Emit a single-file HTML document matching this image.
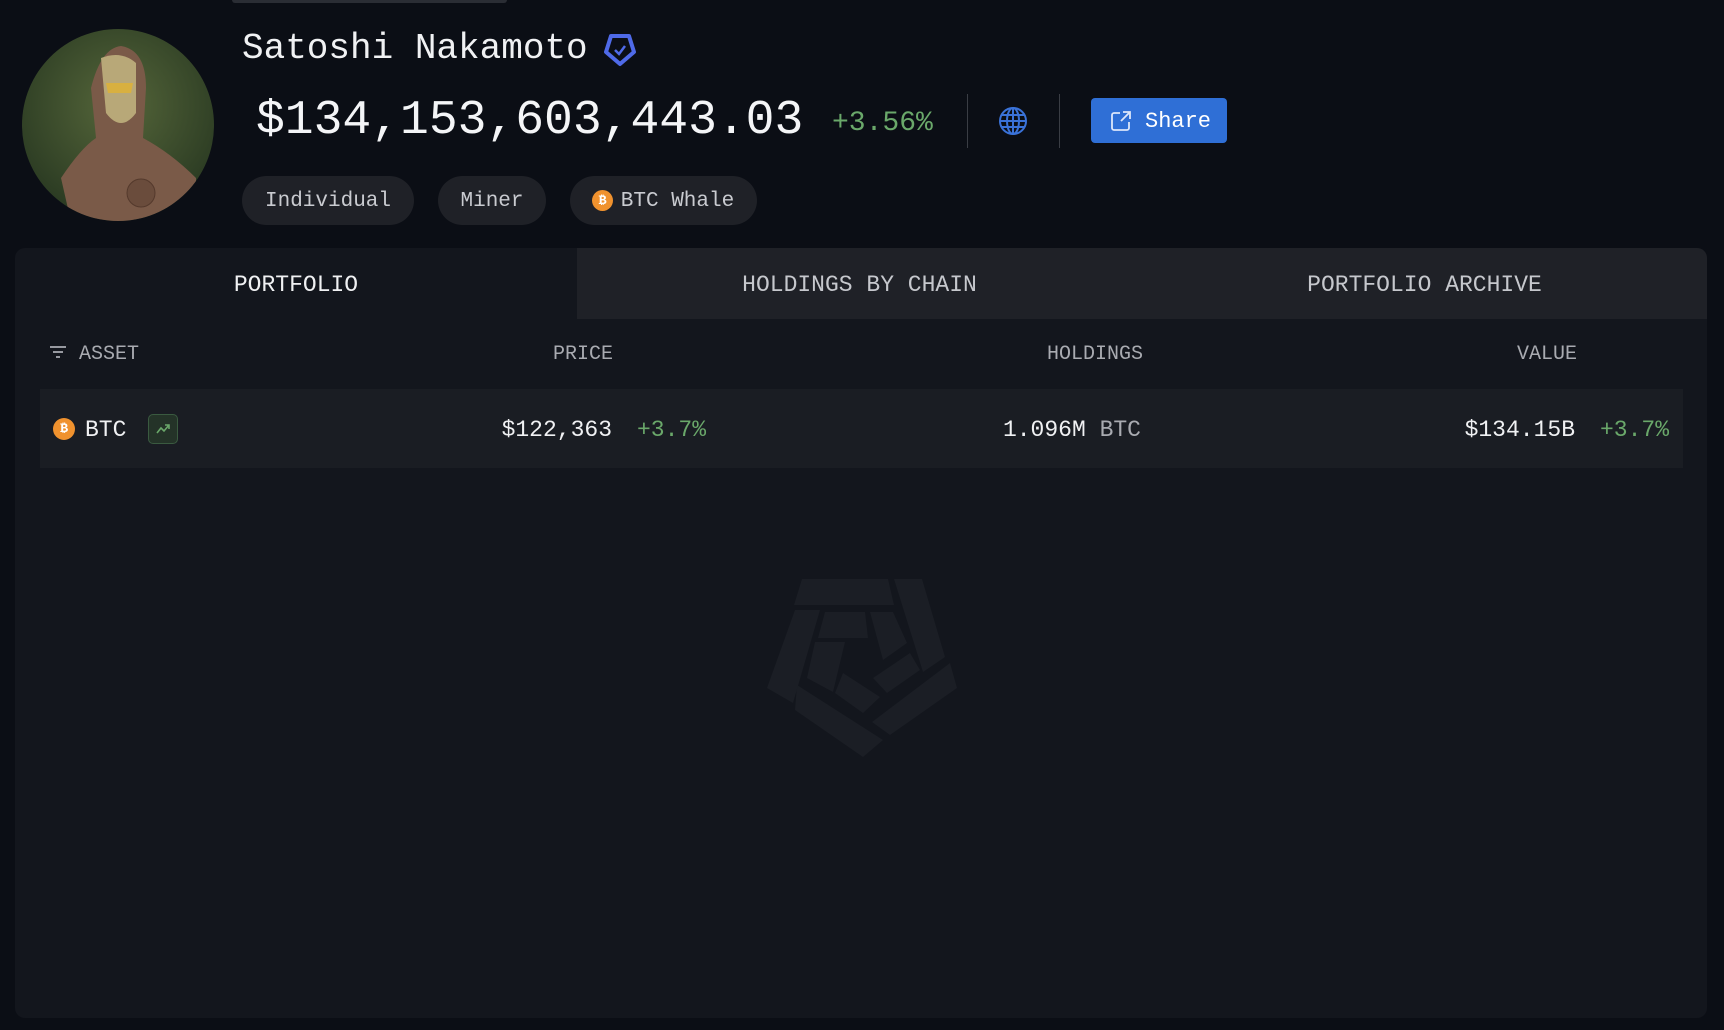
<!DOCTYPE html>
<html><head><meta charset="utf-8"><style>
*{margin:0;padding:0;box-sizing:border-box}
body{width:1724px;height:1030px;background:#0b0e15;font-family:"Liberation Mono",monospace;color:#e8e9ec;position:relative;overflow:hidden}
.a{position:absolute;white-space:nowrap}
.tag{position:absolute;top:176px;height:49px;border-radius:25px;background:#1f2127;color:#c9cbd0;font-size:21px;line-height:51px;text-align:center}
</style></head><body>
<div class="a" style="left:232px;top:0;width:275px;height:3px;background:#2a2d34;border-radius:0 0 3px 3px"></div>
<svg class="a" style="left:21px;top:28px" width="194" height="194" viewBox="0 0 194 194">
<defs><clipPath id="c"><circle cx="97" cy="97" r="96"/></clipPath>
<radialGradient id="g" cx="50%" cy="40%" r="60%"><stop offset="0" stop-color="#55663a"/><stop offset="1" stop-color="#2a3a22"/></radialGradient></defs>
<g clip-path="url(#c)"><rect width="194" height="194" fill="url(#g)"/>
<path d="M50 194 L40 150 Q60 120 75 110 L70 60 Q80 20 100 18 Q125 22 125 60 L122 110 Q150 125 175 150 L175 194Z" fill="#7a5a48"/>
<path d="M80 30 Q100 22 115 35 L115 85 Q100 105 85 85Z" fill="#b8a878"/>
<path d="M85 55 L112 55 L110 65 L87 65Z" fill="#d8b040"/>
<circle cx="120" cy="165" r="14" fill="#6a4c3c" stroke="#54392c"/></g></svg>
<div class="a" style="left:242px;top:28px;font-size:36px;color:#f0f1f3">Satoshi Nakamoto</div>
<svg class="a" style="left:603px;top:33px" width="34" height="34" viewBox="0 0 34 34"><path d="M8 3 H26 L31 19 L17 31 L3 19Z" fill="none" stroke="#4f6ae8" stroke-width="4" stroke-linejoin="round"/><path d="M12 17 L16 21 L22 13" fill="none" stroke="#4f6ae8" stroke-width="2.5"/></svg>
<div class="a" style="left:256px;top:94px;font-size:48px;color:#f4f5f7">$134,153,603,443.03</div>
<div class="a" style="left:832px;top:108px;font-size:28px;color:#6aa86a">+3.56%</div>
<div class="a" style="left:967px;top:94px;width:1px;height:54px;background:#3a3d44"></div>
<svg class="a" style="left:998px;top:106px" width="30" height="30" viewBox="0 0 30 30" fill="none" stroke="#3a72d8" stroke-width="2"><circle cx="15" cy="15" r="13"/><ellipse cx="15" cy="15" rx="6" ry="13"/><path d="M2 15H28M4 9H26M4 21H26M15 2V28"/></svg>
<div class="a" style="left:1059px;top:94px;width:1px;height:54px;background:#3a3d44"></div>
<div class="a" style="left:1091px;top:98px;width:136px;height:45px;background:#2f6fd6;border-radius:4px;color:#fff;font-size:22px;line-height:47px;padding-left:54px">Share</div>
<svg class="a" style="left:1110px;top:110px" width="22" height="22" viewBox="0 0 22 22" fill="none" stroke="#dce6fa" stroke-width="1.8"><path d="M10 3H4a2 2 0 0 0-2 2v13a2 2 0 0 0 2 2h13a2 2 0 0 0 2-2v-6M13 2h7v7M20 2l-9 9"/></svg>
<div class="tag" style="left:242px;width:172px">Individual</div>
<div class="tag" style="left:438px;width:108px">Miner</div>
<div class="tag" style="left:570px;width:187px;padding-left:28px">BTC Whale</div>
<div class="a" style="left:592px;top:190px;width:21px;height:21px;border-radius:50%;background:#f0922e;color:#fff;font-size:13px;line-height:21px;text-align:center;font-weight:bold">₿</div>

<div class="a" style="left:15px;top:248px;width:1692px;height:770px;background:#13161d;border-radius:10px;overflow:hidden">
<div class="a" style="left:562px;top:0;width:1130px;height:71px;background:#1f2127"></div>
<div class="a" style="left:0;top:2px;width:562px;height:71px;line-height:71px;text-align:center;font-size:23px;color:#f0f1f3">PORTFOLIO</div>
<div class="a" style="left:562px;top:2px;width:565px;height:71px;line-height:71px;text-align:center;font-size:23px;color:#c6c8cd">HOLDINGS BY CHAIN</div>
<div class="a" style="left:1127px;top:2px;width:565px;height:71px;line-height:71px;text-align:center;font-size:23px;color:#c6c8cd">PORTFOLIO ARCHIVE</div>
<svg class="a" style="left:34px;top:97px" width="18" height="14" viewBox="0 0 18 14" stroke="#aaacb2" stroke-width="1.8"><path d="M1 2H17M4 7H14M7 12H11"/></svg>
<div class="a" style="left:64px;top:95px;font-size:20px;color:#a9abb1">ASSET</div>
<div class="a" style="right:1094px;top:95px;font-size:20px;color:#a9abb1">PRICE</div>
<div class="a" style="right:564px;top:95px;font-size:20px;color:#a9abb1">HOLDINGS</div>
<div class="a" style="right:130px;top:95px;font-size:20px;color:#a9abb1">VALUE</div>
<div class="a" style="left:25px;top:141px;width:1643px;height:79px;background:#1a1d23"></div>
<div class="a" style="left:38px;top:170px;width:22px;height:22px;border-radius:50%;background:#f0922e;color:#fff;font-size:13px;line-height:22px;text-align:center;font-weight:bold">₿</div>
<div class="a" style="left:70px;top:169px;font-size:23px;color:#f0f1f3">BTC</div>
<div class="a" style="left:133px;top:166px;width:30px;height:30px;border-radius:5px;background:#243328;border:1px solid #3a5a40"></div>
<svg class="a" style="left:140px;top:173px" width="16" height="16" viewBox="0 0 16 16" fill="none" stroke="#6aa86a" stroke-width="1.6"><path d="M2 12L6 7L9 10L14 4M10 4H14V8"/></svg>
<div class="a" style="right:1095px;top:169px;font-size:23px;color:#f0f1f3">$122,363</div>
<div class="a" style="left:622px;top:169px;font-size:23px;color:#6aa86a">+3.7%</div>
<div class="a" style="right:566px;top:169px;font-size:23px;color:#f0f1f3">1.096M <span style="color:#a9abb1">BTC</span></div>
<div class="a" style="right:132px;top:169px;font-size:23px;color:#f0f1f3">$134.15B</div>
<div class="a" style="left:1585px;top:169px;font-size:23px;color:#6aa86a">+3.7%</div>
</div>
<svg class="a" style="left:0;top:0" width="1724" height="1030" fill="#1b1e25">
<polygon points="802,579 888,579 894,605 794,605"/>
<polygon points="894,579 922,579 945,657 923,672"/>
<polygon points="950,663 957,688 890,735 872,722"/>
<polygon points="797,685 883,740 863,757 795,710"/>
<polygon points="795,610 820,610 793,703 767,688"/>
<polygon points="825,612 865,612 868,638 818,638"/>
<polygon points="870,612 893,612 907,643 883,660"/>
<polygon points="873,678 910,653 920,670 887,693"/>
<polygon points="843,673 880,697 863,713 835,693"/>
<polygon points="815,642 845,642 833,692 807,678"/>
</svg>
</body></html>
